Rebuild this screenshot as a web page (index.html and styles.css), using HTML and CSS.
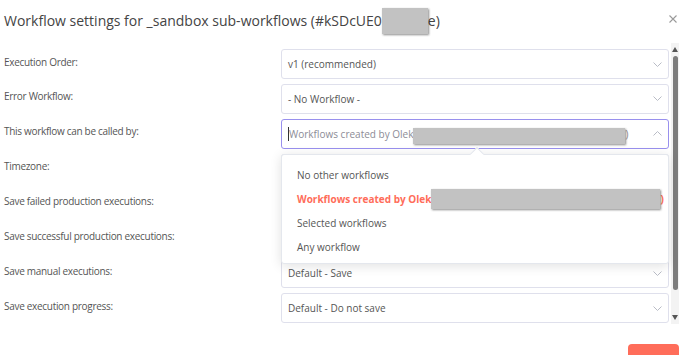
FILE: index.html
```html
<!DOCTYPE html>
<html>
<head>
<meta charset="utf-8">
<link rel="stylesheet" href="styles.css">
</head>
<body>
<div class="dialog">
  <div class="title-bar">
    <div class="title">Workflow settings for _sandbox sub-workflows (#kSDcUE0<span class="redact redact-title"></span>e)</div>
    <svg class="close" width="8" height="8" viewBox="0 0 8 8"><path d="M0.5 0.5L7.5 7.5M7.5 0.5L0.5 7.5" stroke="#9a9a9a" stroke-width="1.1"/></svg>
  </div>
  <div class="body">
    <div class="form">
      <div class="label">Execution Order:</div>
      <div class="select"><span class="val">v1 (recommended)</span><svg class="chev" width="9" height="5" viewBox="0 0 9 5"><path d="M0.5 0.5L4.5 4.5L8.5 0.5" fill="none" stroke="#b9bcc6" stroke-width="1"/></svg></div>

      <div class="label">Error Workflow:</div>
      <div class="select"><span class="val">- No Workflow -</span><svg class="chev" width="9" height="5" viewBox="0 0 9 5"><path d="M0.5 0.5L4.5 4.5L8.5 0.5" fill="none" stroke="#b9bcc6" stroke-width="1"/></svg></div>

      <div class="label">This workflow can be called by:</div>
      <div class="select-wrap">
        <div class="select focused"><span class="caret"></span><span class="val placeholder">Workflows created by Olek<span class="redact redact-input"></span>)</span><svg class="chev" width="9" height="5" viewBox="0 0 9 5"><path d="M0.5 4.5L4.5 0.5L8.5 4.5" fill="none" stroke="#b9bcc6" stroke-width="1"/></svg></div>
        <div class="menu">
          <div class="menu-arrow"></div>
          <div class="item">No other workflows</div>
          <div class="item active">Workflows created by Olek<span class="redact redact-item"></span>)</div>
          <div class="item">Selected workflows</div>
          <div class="item">Any workflow</div>
        </div>
      </div>

      <div class="label">Timezone:</div>
      <div class="select"></div>

      <div class="label">Save failed production executions:</div>
      <div class="select"></div>

      <div class="label">Save successful production executions:</div>
      <div class="select"></div>

      <div class="label">Save manual executions:</div>
      <div class="select"><span class="val">Default - Save</span><svg class="chev" width="9" height="5" viewBox="0 0 9 5"><path d="M0.5 0.5L4.5 4.5L8.5 0.5" fill="none" stroke="#b9bcc6" stroke-width="1"/></svg></div>

      <div class="label">Save execution progress:</div>
      <div class="select"><span class="val">Default - Do not save</span><svg class="chev" width="9" height="5" viewBox="0 0 9 5"><path d="M0.5 0.5L4.5 4.5L8.5 0.5" fill="none" stroke="#b9bcc6" stroke-width="1"/></svg></div>
    </div>
    <div class="scrollbar">
      <div class="sb-up"></div>
      <div class="sb-track"><div class="sb-thumb"></div></div>
      <div class="sb-down"></div>
    </div>
  </div>
  <div class="footer">
    <button class="save">Save</button>
  </div>
</div>
</body>
</html>
```
FILE: styles.css
```css
html, body {
  margin: 0;
  padding: 0;
  background: #fff;
  overflow: hidden;
}
body {
  font-family: "Open Sans", "DejaVu Sans", sans-serif;
  color: #555;
  width: 689px;
  height: 355px;
}
.dialog {
  padding: 0 10px 0 4px;
}
.title-bar {
  height: 42px;
  display: flex;
  align-items: center;
  justify-content: space-between;
  padding-right: 2px;
}
.title {
  font-size: 14px;
  color: #444;
  white-space: nowrap;
  position: relative;
  top: -1px;
}
.redact {
  display: inline-block;
  background: #c2c2c2;
  box-shadow: 1px 1px 2px rgba(0, 0, 0, 0.45);
  vertical-align: middle;
}
.redact-title {
  width: 46px;
  height: 26px;
  margin: -6px 0 -6px 0;
  position: relative;
  top: -1px;
}
.close {
  margin-top: -4px;
}
.body {
  display: flex;
  margin-top: 7px;
}
.form {
  width: 665px;
  display: grid;
  grid-template-columns: 277px 388px;
  grid-auto-rows: 30px;
  row-gap: 4.86px;
  align-items: center;
}
.label {
  font-size: 10px;
  letter-spacing: -0.3px;
  color: #555;
  position: relative;
  top: -2.5px;
}
.select-wrap {
  position: relative;
}
.select {
  height: 30px;
  box-sizing: border-box;
  border: 1px solid #dfe0ec;
  border-radius: 3px;
  display: flex;
  align-items: center;
  padding: 0 6px 0 6px;
  font-size: 10px;
  color: #555;
  background: #fff;
}
.select .val {
  flex: 1;
  white-space: nowrap;
}
.select.focused {
  border-color: #9990ee;
}
.placeholder {
  color: #8c8c96;
}
.redact-input {
  width: 212px;
  height: 16px;
  margin: -8px 0 -8px 0;
  position: relative;
  top: 1px;
}
.caret {
  width: 1px;
  height: 14px;
  background: #333;
}
.menu {
  position: absolute;
  top: 35px;
  left: 0;
  width: 388px;
  height: 110px;
  box-sizing: border-box;
  border: 1px solid #e4e7ed;
  border-radius: 3px;
  background: #fff;
  box-shadow: 0 2px 12px rgba(0, 0, 0, 0.12);
  padding-top: 8px;
  z-index: 5;
}
.menu-arrow {
  position: absolute;
  top: -6px;
  left: 190px;
  width: 9px;
  height: 9px;
  background: #fff;
  border-top: 1px solid #e4e7ed;
  border-left: 1px solid #e4e7ed;
  transform: rotate(45deg);
}
.item {
  height: 24px;
  line-height: 24px;
  padding-left: 15px;
  font-size: 10px;
  color: #555;
  white-space: nowrap;
}
.item.active {
  color: #ff6d5a;
  font-weight: 700;
}
.redact-item {
  width: 229px;
  height: 20px;
  margin: -10px 0 -10px 0;
  position: relative;
  top: -1px;
}
.scrollbar {
  width: 9px;
  margin-left: 2px;
  background: #f3f3f3;
  display: flex;
  flex-direction: column;
  align-items: center;
  height: 281px;
  margin-top: -6px;
}
.sb-up, .sb-down {
  width: 0;
  height: 0;
  border-left: 3.5px solid transparent;
  border-right: 3.5px solid transparent;
  margin: 4px 0;
}
.sb-up {
  border-bottom: 5px solid #555;
}
.sb-down {
  border-top: 5px solid #555;
}
.sb-track {
  flex: 1;
  width: 100%;
  display: flex;
  justify-content: center;
}
.sb-thumb {
  width: 5px;
  height: 234px;
  border-radius: 3px;
  background: #7d7d7d;
}
.footer {
  display: flex;
  justify-content: flex-end;
  margin-top: 20px;
}
.save {
  width: 51px;
  height: 36px;
  border: none;
  border-radius: 4px;
  background: #ff6d5a;
  color: #fff;
  font-family: inherit;
  font-size: 12px;
  font-weight: 600;
}
```
